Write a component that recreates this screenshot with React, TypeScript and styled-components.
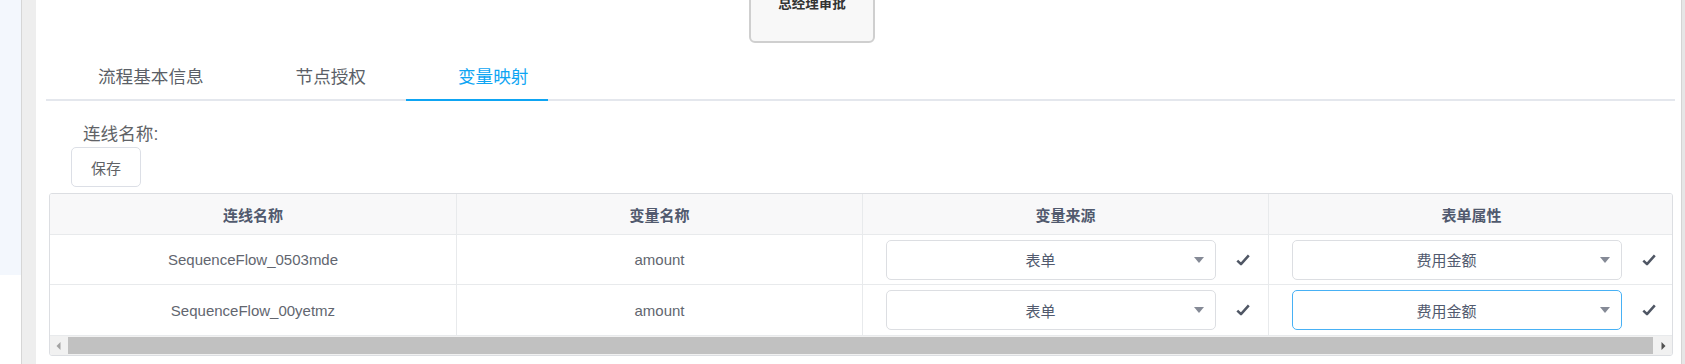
import styled, { createGlobalStyle } from "styled-components";

const GlobalStyle = createGlobalStyle`
  html, body {
    margin: 0;
    padding: 0;
    background: #fff;
    overflow: hidden;
  }
  body {
    font-family: "Liberation Sans", Arial, "Noto Sans CJK SC", sans-serif;
    color: #606266;
  }
`;

const Page = styled.div`
  display: flex;
  height: 364px;
  width: 1685px;
`;

const SideStrip = styled.div`
  width: 21px;
  display: flex;
  flex-direction: column;
`;

const SideMenu = styled.div`
  height: 275px;
  background: #f3f7fd;
`;

const Splitter = styled.div`
  width: 14px;
  background: #eeeeee;
  border-left: 1px solid #d6d6d6;
`;

const Panel = styled.div`
  flex: 1;
  display: flex;
  flex-direction: column;
  padding: 0 6px 0 10px;
  min-width: 0;
`;

const EdgeBar = styled.div`
  width: 3px;
  background: #e6e6e6;
  border-left: 1px solid #d4d4d4;
`;

const Canvas = styled.div`
  position: relative;
  height: 55px;
  overflow: hidden;
`;

const TaskNode = styled.div`
  position: absolute;
  left: 703px;
  top: -40px;
  width: 126px;
  height: 83px;
  box-sizing: border-box;
  border: 2px solid #cfcfcf;
  border-radius: 6px;
  background: #f8f8f8;
  display: flex;
  align-items: center;
  justify-content: center;
  font-size: 13.5px;
  font-weight: bold;
  color: #333;
`;

const TabNav = styled.div`
  position: relative;
  display: flex;
  height: 44px;
  padding-left: 6px;
  border-bottom: 2px solid #e4e7ed;
`;

const TabItem = styled.div<{ $active?: boolean }>`
  padding: 0 46px;
  line-height: 44px;
  font-size: 17.6px;
  color: ${(p) => (p.$active ? "#0ea5f3" : "#5b5f67")};
  white-space: nowrap;
`;

const ActiveBar = styled.div`
  position: absolute;
  left: 360px;
  bottom: -2px;
  width: 142px;
  height: 2px;
  background: #0ea5f3;
`;

const FieldLabel = styled.div`
  margin: 21px 0 0 37px;
  font-size: 17.6px;
  line-height: 24px;
  color: #606266;
`;

const SaveButton = styled.button`
  margin: 1px 0 0 25px;
  width: 70px;
  height: 40px;
  box-sizing: border-box;
  border: 1px solid #dcdfe6;
  border-radius: 5px;
  background: #fff;
  font-family: inherit;
  font-size: 15px;
  color: #606266;
  padding: 0;
  align-self: flex-start;
`;

const TableBox = styled.div`
  margin: 6px 2px 0 3px;
  border: 1px solid #dcdee2;
  border-radius: 3px;
  overflow: hidden;
`;

const Grid = styled.div<{ $head?: boolean; $height: number }>`
  display: grid;
  grid-template-columns: 407px 406px 406px 406px;
  height: ${(p) => p.$height}px;
  background: ${(p) => (p.$head ? "#f8f8f9" : "#fff")};
`;

const Cell = styled.div<{ $head?: boolean }>`
  display: flex;
  align-items: center;
  justify-content: center;
  box-sizing: border-box;
  border-right: 1px solid #e8eaec;
  border-bottom: 1px solid #e8eaec;
  font-size: 15px;
  font-weight: ${(p) => (p.$head ? "bold" : "normal")};
  color: ${(p) => (p.$head ? "#515a6e" : "#62666f")};
  white-space: nowrap;
`;

const EditCell = styled(Cell)`
  justify-content: flex-start;
  padding: 0 18px 0 23px;
  gap: 20px;
`;

const Select = styled.div<{ $focused?: boolean }>`
  flex: 1;
  height: 40px;
  box-sizing: border-box;
  display: flex;
  align-items: center;
  border: 1px solid ${(p) => (p.$focused ? "#47b1f5" : "#dcdee2")};
  border-radius: 5px;
  background: #fff;
`;

const SelectValue = styled.span`
  flex: 1;
  text-align: center;
  font-size: 15px;
  color: #515a6e;
`;

const Caret = styled.span`
  width: 0;
  height: 0;
  margin-right: 11px;
  border-left: 5.5px solid transparent;
  border-right: 5.5px solid transparent;
  border-top: 6px solid #858a96;
`;

const ScrollTrack = styled.div`
  display: flex;
  align-items: center;
  height: 19px;
  background: #f1f1f1;
`;

const ScrollButton = styled.div`
  width: 17px;
  height: 19px;
  display: flex;
  align-items: center;
  justify-content: center;
`;

const ScrollThumb = styled.div`
  flex: 1;
  height: 17px;
  margin: 0 2px 0 1px;
  background: #c1c1c1;
`;

function Check() {
  return (
    <svg width="14" height="12" viewBox="0 0 14 12">
      <path
        d="M1.3 6.6 L5 10.2 L12.8 1.4"
        fill="none"
        stroke="#4f5664"
        strokeWidth="2.5"
        strokeLinejoin="round"
      />
    </svg>
  );
}

function Arrow({ dir, color }: { dir: "left" | "right"; color: string }) {
  return (
    <svg width="5" height="8" viewBox="0 0 5 8">
      {dir === "left" ? (
        <path d="M4.5 0 L0.5 4 L4.5 8 Z" fill={color} />
      ) : (
        <path d="M0.5 0 L4.5 4 L0.5 8 Z" fill={color} />
      )}
    </svg>
  );
}

const rows = [
  { flow: "SequenceFlow_0503mde", variable: "amount", source: "表单", attr: "费用金额", focused: false },
  { flow: "SequenceFlow_00yetmz", variable: "amount", source: "表单", attr: "费用金额", focused: true },
];

const headers = ["连线名称", "变量名称", "变量来源", "表单属性"];

export default function App() {
  return (
    <>
      <GlobalStyle />
      <Page>
        <SideStrip>
          <SideMenu />
        </SideStrip>
        <Splitter />
        <Panel>
          <Canvas>
            <TaskNode>总经理审批</TaskNode>
          </Canvas>
          <TabNav>
            <TabItem>流程基本信息</TabItem>
            <TabItem>节点授权</TabItem>
            <TabItem $active>变量映射</TabItem>
            <ActiveBar />
          </TabNav>
          <FieldLabel>连线名称:</FieldLabel>
          <SaveButton>保存</SaveButton>
          <TableBox>
            <Grid $head $height={41}>
              {headers.map((h) => (
                <Cell $head key={h}>
                  {h}
                </Cell>
              ))}
            </Grid>
            {rows.map((r, i) => (
              <Grid key={r.flow} $height={i === 0 ? 50 : 51}>
                <Cell>{r.flow}</Cell>
                <Cell>{r.variable}</Cell>
                <EditCell>
                  <Select>
                    <SelectValue>{r.source}</SelectValue>
                    <Caret />
                  </Select>
                  <Check />
                </EditCell>
                <EditCell>
                  <Select $focused={r.focused}>
                    <SelectValue>{r.attr}</SelectValue>
                    <Caret />
                  </Select>
                  <Check />
                </EditCell>
              </Grid>
            ))}
            <ScrollTrack>
              <ScrollButton>
                <Arrow dir="left" color="#a3a3a3" />
              </ScrollButton>
              <ScrollThumb />
              <ScrollButton>
                <Arrow dir="right" color="#505050" />
              </ScrollButton>
            </ScrollTrack>
          </TableBox>
        </Panel>
        <EdgeBar />
      </Page>
    </>
  );
}
